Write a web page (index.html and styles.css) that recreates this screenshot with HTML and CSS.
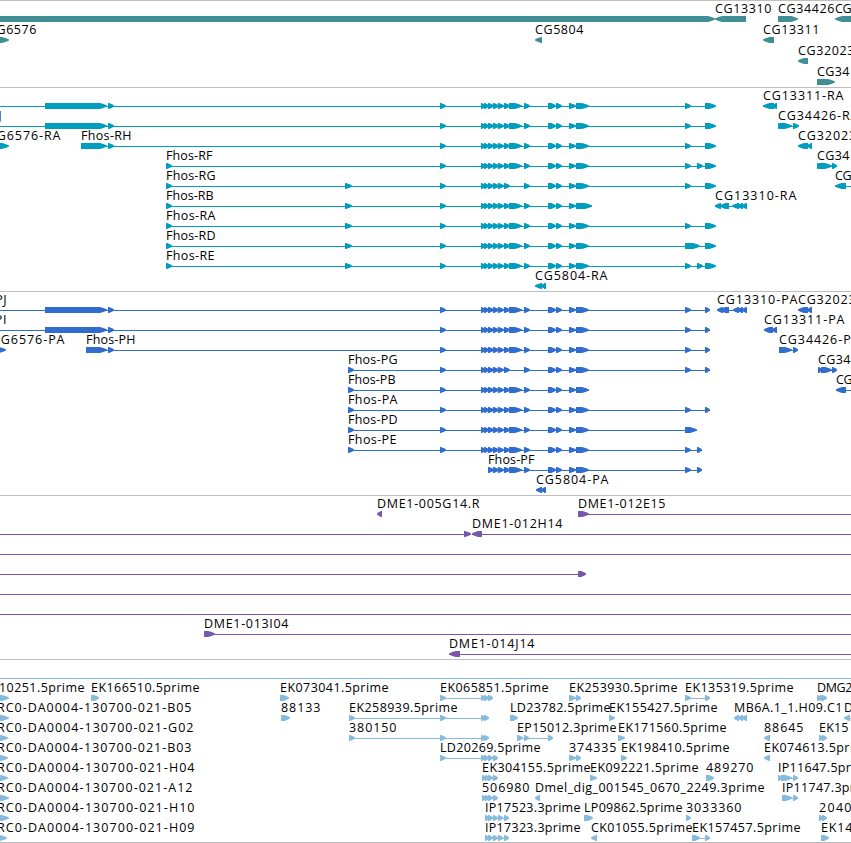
FILE: index.html
```
<!DOCTYPE html>
<html lang="en">
<head>
  <meta charset="UTF-8">
  <meta name="viewport" content="width=device-width, initial-scale=1">
  <title>Genome Browser</title>
  <link rel="stylesheet" href="styles.css">
</head>
<body>
  <main class="browser">
    <section class="track genes" id="genes"></section>
    <section class="track transcripts" id="transcripts"></section>
    <section class="track proteins" id="proteins"></section>
    <section class="track bacs" id="bacs"></section>
    <section class="track ests" id="ests"></section>
  </main>
  <script src="tracks.js"></script>
</body>
</html>
```

FILE: styles.css
```
body {
  margin: 0;
  background: #fff;
  font-family: 'Open Sans', sans-serif;
  overflow: hidden;
}
.browser {
  display: flex;
  flex-direction: column;
  width: 851px;
  border-bottom: 1px solid #bebebe;
}
.track {
  box-sizing: border-box;
  border-top: 1px solid #bebebe;
  overflow: hidden;
}
.track svg {
  display: block;
  fill: currentColor;
}
.genes {
  height: 87px;
  color: #3f8f94;
}
.transcripts {
  height: 204px;
  color: #009dbf;
}
.proteins {
  height: 204px;
  color: #306dce;
}
.bacs {
  height: 164px;
  color: #7657a9;
}
.ests {
  height: 183px;
  color: #86bbde;
}
.label {
  font-family: 'Open Sans', 'DejaVu Sans', sans-serif;
  font-size: 12.5px;
  fill: #000;
}
```

FILE: tracks.js
```
const WIDTH = 851;
const SVG = 'http://www.w3.org/2000/svg';

// exon groups shared by the Fhos isoforms
const head = [[45, 48], [46, 107], [108, 114]];
const first = [[440, 446], [481, 485], [484, 489]];
const mid = [[488, 494], [493, 499], [498, 504], [504, 510]];
const big = [[509, 522]];
const late = [[524, 530], [548, 556], [556, 562], [569, 576]];
const last = [[576, 589]];
const full = [...first, ...mid, ...big, ...late, ...last];
const short = [...first, ...mid, ...late, ...last];

// feature: [label, x, label width, strand, exons, line start, line end]
const tracks = {
  genes: { step: 21, rows: [
    [['', 0, 0, 1, [[-20, 715]]],
     ['CG13310', 715, 57, -1, [[715, 746]]],
     ['CG34426', 778, 57, 1, [[778, 798]]],
     ['CG', 835, 17, -1, [[835, 880]]]],
    [['CG6576', -12, 49, 1, [[-20, 9]]],
     ['CG5804', 535, 49, -1, [[535, 542]]],
     ['CG13311', 763, 57, -1, [[763, 774]]]],
    [['CG32023', 798, 57, -1, [[798, 808]]]],
    [['CG34', 817, 33, 1, [[817, 835]]]]
  ] },
  transcripts: { step: 20, rows: [
    [['', 0, 0, 1, [...head, ...full, [685, 691], [705, 716]], -5],
     ['CG13311-RA', 763, 81, -1, [[763, 774], [772, 777]]]],
    [['Fhos-RJ', -45, 47, 1, [...head, ...full, [685, 691], [705, 716]], -5],
     ['CG34426-RA', 778, 81, 1, [[778, 782], [780, 792], [793, 799]]]],
    [['CG6576-RA', -12, 73, 1, [[-20, 9]]],
     ['Fhos-RH', 81, 51, 1, [[81, 107], [108, 114], ...full, [685, 691], [705, 716]]],
     ['CG32023-RA', 798, 81, -1, [[798, 808], [807, 812]]]],
    [['Fhos-RF', 166, 47, 1, [[166, 172], ...full, [685, 691], [697, 703], [705, 716]]],
     ['CG34', 817, 33, 1, [[817, 821], [819, 832], [832, 837]]]],
    [['Fhos-RG', 166, 50, 1, [[166, 172], [345, 352], ...short, [685, 691], [705, 716]]],
     ['CG', 835, 17, -1, [[835, 846], [870, 880]]]],
    [['Fhos-RB', 166, 48, 1, [[166, 172], [345, 352], ...first, ...mid, ...big, ...late, [576, 592]]],
     ['CG13310-RA', 715, 82, -1, [[715, 721], [720, 729], [732, 739], [737, 743], [742, 747]]]],
    [['Fhos-RA', 166, 50, 1, [[166, 172], [345, 352], ...full, [685, 691], [705, 716]]]],
    [['Fhos-RD', 166, 50, 1, [[166, 172], [345, 352], ...full, [685, 700], [705, 716]]]],
    [['Fhos-RE', 166, 49, 1, [[166, 172], [345, 352], ...full, [685, 691], [697, 703], [705, 716]]]],
    [['CG5804-RA', 535, 73, -1, [[535, 542], [541, 546]]]]
  ] },
  proteins: { step: 20, rows: [
    [['Fhos-PJ', -39, 46, 1, [...head, ...full, [685, 691], [705, 710]], -5],
     ['CG13310-PA', 717, 81, -1, [[717, 723], [720, 729], [733, 739], [737, 743], [742, 747]]],
     ['CG32023-PA', 798, 80, -1, [[798, 808], [807, 812]]]],
    [['Fhos-PI', -40, 47, 1, [...head, ...full, [685, 691], [705, 710]], -5],
     ['CG13311-PA', 764, 81, -1, [[764, 773], [772, 777]]]],
    [['CG6576-PA', -8, 73, 1, [[-20, 6]]],
     ['Fhos-PH', 86, 50, 1, [[86, 107], [108, 114], ...full, [685, 691], [705, 710]]],
     ['CG34426-PA', 779, 81, 1, [[779, 792], [793, 798]]]],
    [['Fhos-PG', 348, 50, 1, [[348, 354], ...short, [685, 691], [705, 710]]],
     ['CG34', 818, 33, 1, [[818, 822], [821, 832], [832, 837]]]],
    [['Fhos-PB', 348, 48, 1, [[348, 354], ...full]],
     ['CG', 836, 17, -1, [[836, 846], [870, 880]]]],
    [['Fhos-PA', 348, 50, 1, [[348, 354], ...full, [685, 691], [705, 710]]]],
    [['Fhos-PD', 348, 50, 1, [[348, 354], ...full, [685, 697]]]],
    [['Fhos-PE', 348, 49, 1, [[348, 354], ...full, [685, 691], [697, 702]]]],
    [['Fhos-PF', 488, 47, 1, [...mid, ...big, ...late, ...last, [685, 691], [697, 702]]]],
    [['CG5804-PA', 536, 73, -1, [[536, 542], [541, 546]]]]
  ] },
  bacs: { step: 20, rows: [
    [['DME1-005G14.R', 377, 103, -1, [[377, 382]]],
     ['DME1-012E15', 578, 88, 1, [[578, 589]], 578, WIDTH]],
    [['', 0, 0, 1, [[464, 471]], 0, 471],
     ['DME1-012H14', 472, 91, -1, [[472, 482]], 472, WIDTH]],
    [['', 0, 0, 1, [], 0, WIDTH]],
    [['', 0, 0, 1, [[578, 586]], 0, 586]],
    [['', 0, 0, 1, [], 0, WIDTH]],
    [['', 0, 0, 1, [], 0, WIDTH]],
    [['DME1-013I04', 204, 85, 1, [[204, 215]], 204, WIDTH]],
    [['DME1-014J14', 449, 86, -1, [[449, 460]], 449, WIDTH]]
  ] },
  ests: { step: 20, rows: [
    [['', 0, 0, 1, [], 0, WIDTH]],
    [['10251.5prime', -1, 86, 1, [[-20, 9]]],
     ['EK166510.5prime', 91, 109, 1, [[91, 99]]],
     ['EK073041.5prime', 280, 109, 1, [[280, 289]]],
     ['EK065851.5prime', 440, 109, 1, [[440, 446], [481, 485], [484, 489], [488, 493]]],
     ['EK253930.5prime', 569, 109, 1, [[569, 576], [576, 581]]],
     ['EK135319.5prime', 685, 109, 1, [[685, 691], [705, 710]]],
     ['DMG2', 817, 36, 1, [[817, 821], [820, 824], [822, 827]]]],
    [['RC0-DA0004-130700-021-B05', -3, 195, 1, [[-20, 9]]],
     ['88133', 281, 40, 1, [[281, 290]]],
     ['EK258939.5prime', 349, 109, 1, [[349, 355], [440, 446], [481, 486], [484, 489]]],
     ['LD23782.5prime', 510, 101, 1, [[510, 518]]],
     ['EK155427.5prime', 609, 109, 1, [[609, 615]]],
     ['MB6A.1_1.H09.C1', 734, 109, -1, [[734, 739], [738, 743], [742, 747]]],
     ['D', 844, 9, -1, [[844, 850], [870, 880]]]],
    [['RC0-DA0004-130700-021-G02', -3, 197, 1, [[-20, 8]]],
     ['380150', 349, 48, 1, [[349, 355], [440, 446], [481, 486], [484, 489]]],
     ['EP15012.3prime', 517, 100, 1, [[517, 523], [524, 529], [548, 553]]],
     ['EK171560.5prime', 618, 109, 1, [[618, 625]]],
     ['88645', 764, 40, -1, [[764, 770]]],
     ['EK15', 819, 30, 1, [[819, 823], [822, 827]]]],
    [['RC0-DA0004-130700-021-B03', -3, 195, 1, [[-20, 8]]],
     ['LD20269.5prime', 440, 101, 1, [[440, 446], [481, 485], [484, 489], [488, 493], [493, 498]]],
     ['374335', 569, 48, 1, [[569, 576], [576, 581]]],
     ['EK198410.5prime', 621, 109, 1, [[621, 627]]],
     ['EK074613.5prime', 764, 109, -1, [[764, 770]]]],
    [['RC0-DA0004-130700-021-H04', -3, 198, 1, [[-20, 8]]],
     ['EK304155.5prime', 482, 109, 1, [[482, 486], [485, 490], [488, 493], [493, 498]]],
     ['EK092221.5prime', 590, 109, 1, [[590, 597]]],
     ['489270', 706, 48, 1, [[706, 714]]],
     ['IP11647.5prime', 778, 96, 1, [[778, 782], [781, 792], [793, 798]]]],
    [['RC0-DA0004-130700-021-A12', -3, 196, 1, [[-20, 9]]],
     ['506980', 482, 48, 1, [[482, 486], [485, 490], [488, 493], [493, 498]]],
     ['Dmel_dig_001545_0670_2249.3prime', 535, 230, -1, [[535, 540]]],
     ['IP11747.3prime', 782, 96, 1, [[782, 792], [793, 798]]]],
    [['RC0-DA0004-130700-021-H10', -3, 198, 1, [[-20, 9]]],
     ['IP17523.3prime', 485, 96, 1, [[485, 489], [488, 493], [493, 498], [498, 503], [504, 509]]],
     ['LP09862.5prime', 584, 99, 1, [[584, 593]]],
     ['3033360', 686, 56, 1, [[686, 691]]],
     ['2040', 819, 33, 1, [[819, 823], [822, 827]]]],
    [['RC0-DA0004-130700-021-H09', -3, 198, 1, [[-20, 7]]],
     ['IP17323.3prime', 485, 96, 1, [[485, 489], [488, 493], [493, 498], [498, 503], [504, 509]]],
     ['CK01055.5prime', 591, 102, -1, [[591, 597]]],
     ['EK157457.5prime', 692, 109, 1, [[692, 700], [705, 710]]],
     ['EK14', 821, 32, 1, [[821, 829]]]]
  ] }
};

function add(parent, tag, attrs) {
  const el = document.createElementNS(SVG, tag);
  for (const key in attrs) el.setAttribute(key, attrs[key]);
  parent.appendChild(el);
  return el;
}

// block with a pointed end, 6px tall; short ones are nearly plain triangles
function exonPoints(a, b, y, strand) {
  const w = b - a;
  const tip = w < 8 ? w - 1 : Math.min(7, w * 0.6);
  const base = strand > 0 ? a : b;
  const end = strand > 0 ? b : a;
  const neck = end - strand * tip;
  const bend = end - strand * tip * 0.4;
  return [[base, y], [neck, y], [bend, y + 1.3], [end, y + 2.5], [end, y + 3.5],
    [bend, y + 4.7], [neck, y + 6], [base, y + 6]].join(' ');
}

for (const id in tracks) {
  const section = document.getElementById(id);
  const height = section.clientHeight;
  const svg = add(section, 'svg', { width: WIDTH, height: height });

  tracks[id].rows.forEach((row, i) => {
    const top = i * tracks[id].step + 15;
    row.forEach(([label, x, w, strand, exons, from, to]) => {
      const start = from !== undefined ? from : exons[0][0];
      const end = to !== undefined ? to : exons[exons.length - 1][1];
      if (exons.length !== 1 || from !== undefined) {
        add(svg, 'rect', { x: start, y: top + 3, width: end - start, height: 1 });
      }
      exons.forEach(([a, b]) => add(svg, 'polygon', { points: exonPoints(a, b, top, strand) }));
      if (label) {
        add(svg, 'text', { class: 'label', x: x, y: top - 3, textLength: w - 0.5 }).textContent = label;
      }
    });
  });
}
```
